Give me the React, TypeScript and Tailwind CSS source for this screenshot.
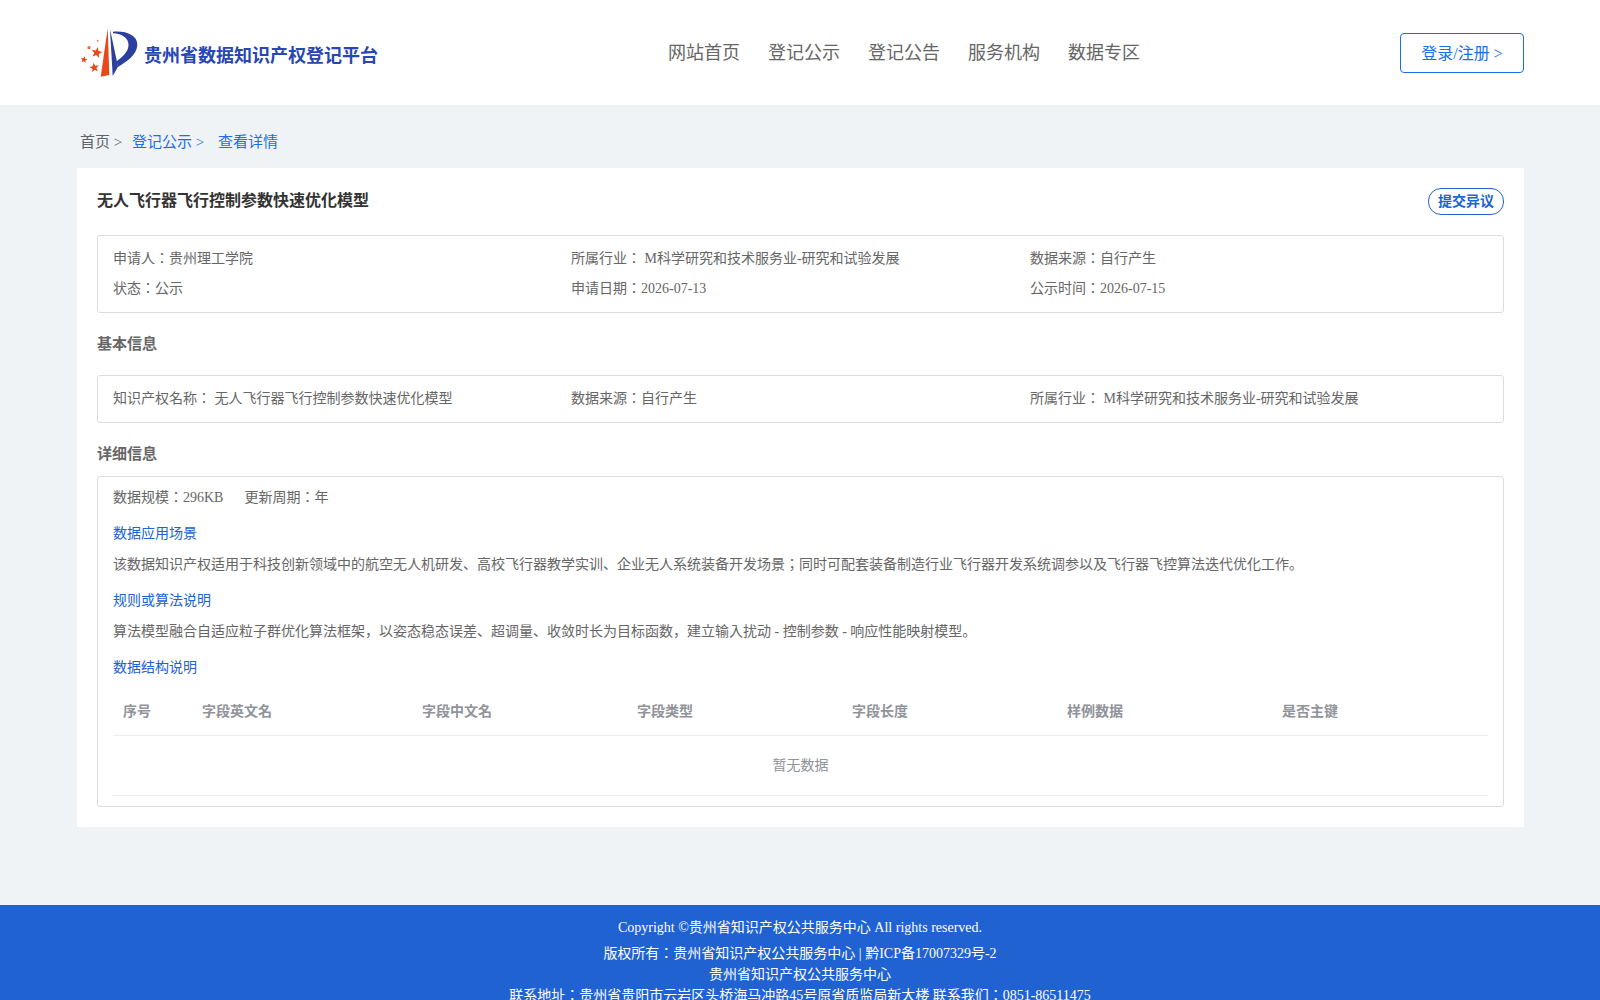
const font = "font-['Liberation_Serif','Noto_Sans_CJK_JP',serif]"

const navItems = ["网站首页", "登记公示", "登记公告", "服务机构", "数据专区"]
const columns = [
  { label: "序号", width: "w-[79px]" },
  { label: "字段英文名", width: "w-[220px]" },
  { label: "字段中文名", width: "w-[215px]" },
  { label: "字段类型", width: "w-[215px]" },
  { label: "字段长度", width: "w-[215px]" },
  { label: "样例数据", width: "w-[215px]" },
  { label: "是否主键", width: "flex-1" },
]

function starPoints(cx: number, cy: number, r: number, rot: number) {
  const pts: string[] = []
  for (let i = 0; i < 10; i++) {
    const rad = i % 2 === 0 ? r : r * 0.42
    const a = ((rot + i * 36 - 90) * Math.PI) / 180
    pts.push(`${(cx + rad * Math.cos(a)).toFixed(2)},${(cy + rad * Math.sin(a)).toFixed(2)}`)
  }
  return pts.join(" ")
}

function Logo() {
  return (
    <svg width="66" height="58" viewBox="0 0 66 58" className="shrink-0">
      <path d="M31.700 4.300 L24.700 52.700 L33.300 51 Z" fill="#e8481c" />
      <path d="M34 5 L36.700 52 L42 42.700 Z" fill="#2b3f9e" />
      <path d="M37 7.700 C50 6.500 61.500 11 61.300 21 C61 31 50 38 42 43 L40.500 37.500 C46 33 52.500 28 52.500 21 C52.500 14 46 9.500 37 9.200 Z" fill="#2b3f9e" />
      <polygon points={starPoints(20.700, 28.700, 5.800, 12)} fill="#e8481c" />
      <polygon points={starPoints(18.300, 43.700, 5, -10)} fill="#e8481c" />
      <polygon points={starPoints(8, 35.700, 3.600, 10)} fill="#e8481c" />
      <circle cx="13" cy="23.700" r="1.600" fill="#ea6a3c" />
      <circle cx="21.700" cy="16.700" r="1" fill="#ee8a64" />
    </svg>
  )
}

function Header() {
  return (
    <header className="h-[105px] bg-white flex items-start pl-[76px] pr-[76px]">
      <div className="w-[561px] flex items-start pt-[24px]">
        <Logo />
        <span className="text-[18px] leading-[24px] font-bold text-[#2846b4] ml-[2px] mt-[20px]">贵州省数据知识产权登记平台</span>
      </div>
      <nav className="flex gap-[28px] pt-[39px] pl-[31px] text-[18px] leading-[28px] text-[#666666]">
        {navItems.map((item) => (
          <a key={item}>{item}</a>
        ))}
      </nav>
      <a className="ml-auto mt-[33px] w-[124px] h-[40px] pt-[1px] flex items-center justify-center border border-[#1a6fe8] rounded-[4px] text-[16px] text-[#1a6fe8]">
        登录/注册 &gt;
      </a>
    </header>
  )
}

function InfoRow({ items }: { items: string[] }) {
  return (
    <div className="flex text-[14px] leading-[20px] text-[#666666]">
      <span className="w-[458px]">{items[0]}</span>
      <span className="w-[459px]">{items[1]}</span>
      <span>{items[2]}</span>
    </div>
  )
}

function SectionLink({ children }: { children: string }) {
  return <h4 className="text-[14px] leading-[20px] text-[#2062d2] font-normal">{children}</h4>
}

function Detail() {
  return (
    <section className="bg-white ml-[77px] w-[1447px] h-[659px] px-[20px] pt-[20px]">
      <div className="flex justify-between items-start">
        <h1 className="text-[16px] leading-[24px] font-bold text-[#333333] pt-[1px]">无人飞行器飞行控制参数快速优化模型</h1>
        <button className="w-[76px] h-[27px] border border-[#2062d2] rounded-[13px] text-[14px] font-bold text-[#2062d2]">提交异议</button>
      </div>

      <div className="mt-[20px] h-[78px] border border-[#dddddd] rounded-[3px] px-[15px] pt-[13px] flex flex-col gap-[10px]">
        <InfoRow items={["申请人：贵州理工学院", "所属行业： M科学研究和技术服务业-研究和试验发展", "数据来源：自行产生"]} />
        <InfoRow items={["状态：公示", "申请日期：2026-07-13", "公示时间：2026-07-15"]} />
      </div>

      <h3 className="mt-[21px] text-[15px] leading-[20px] font-bold text-[#666666]">基本信息</h3>

      <div className="mt-[21px] h-[48px] border border-[#dddddd] rounded-[3px] px-[15px] pt-[13px]">
        <InfoRow items={["知识产权名称： 无人飞行器飞行控制参数快速优化模型", "数据来源：自行产生", "所属行业： M科学研究和技术服务业-研究和试验发展"]} />
      </div>

      <h3 className="mt-[21px] text-[15px] leading-[20px] font-bold text-[#666666]">详细信息</h3>

      <div className="mt-[12px] h-[331px] border border-[#dddddd] rounded-[3px] px-[15px] pt-[11px] text-[14px] leading-[20px] text-[#666666]">
        <div className="flex gap-[21px]">
          <span>数据规模：296KB</span>
          <span>更新周期：年</span>
        </div>
        <div className="mt-[16px]">
          <SectionLink>数据应用场景</SectionLink>
        </div>
        <p className="mt-[11px]">该数据知识产权适用于科技创新领域中的航空无人机研发、高校飞行器教学实训、企业无人系统装备开发场景；同时可配套装备制造行业飞行器开发系统调参以及飞行器飞控算法迭代优化工作。</p>
        <div className="mt-[16px]">
          <SectionLink>规则或算法说明</SectionLink>
        </div>
        <p className="mt-[11px]">算法模型融合自适应粒子群优化算法框架，以姿态稳态误差、超调量、收敛时长为目标函数，建立输入扰动 - 控制参数 - 响应性能映射模型。</p>
        <div className="mt-[16px]">
          <SectionLink>数据结构说明</SectionLink>
        </div>

        <div className="mt-[10px]">
          <div className="flex h-[48px] items-center border-b border-[#ebeef5] font-bold text-[#909399]">
            {columns.map((col) => (
              <span key={col.label} className={`${col.width} pl-[10px]`}>
                {col.label}
              </span>
            ))}
          </div>
          <div className="h-[60px] flex items-center justify-center border-b border-[#ebeef5] text-[#909399]">暂无数据</div>
        </div>
      </div>
    </section>
  )
}

function Footer() {
  return (
    <footer className="mt-[78px] bg-[#2062d2] pt-[12px] text-center text-[14px] leading-[21px] text-white">
      <p className="mb-[5px]">Copyright ©贵州省知识产权公共服务中心 All rights reserved.</p>
      <p>版权所有：贵州省知识产权公共服务中心 | 黔ICP备17007329号-2</p>
      <p>贵州省知识产权公共服务中心</p>
      <p>联系地址：贵州省贵阳市云岩区头桥海马冲路45号原省质监局新大楼 联系我们：0851-86511475</p>
    </footer>
  )
}

export default function App() {
  return (
    <div className={`h-screen overflow-hidden bg-[#eff3f6] ${font}`}>
      <Header />
      <div className="h-[63px] px-[80px] pt-[26px] flex text-[15px] leading-[22px]">
        <span className="text-[#606266] w-[52px]">首页 &gt;</span>
        <span className="text-[#1a6fe8] w-[86px]">登记公示 &gt;</span>
        <span className="text-[#1a6fe8]">查看详情</span>
      </div>
      <Detail />
      <Footer />
    </div>
  )
}
